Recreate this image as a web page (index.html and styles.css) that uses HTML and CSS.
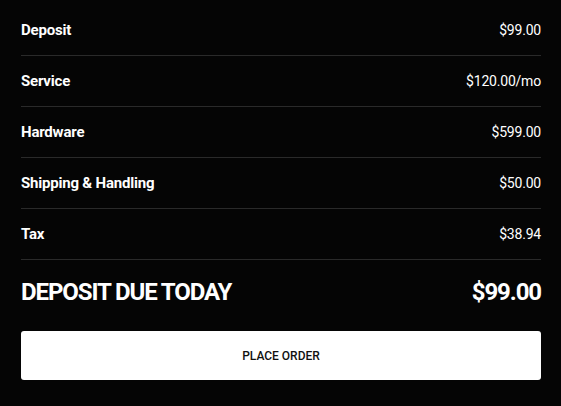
FILE: index.html
```html
<!DOCTYPE html>
<html>
<head>
<meta charset="utf-8">
<link rel="stylesheet" href="styles.css">
</head>
<body>
<div class="summary">
  <div class="row"><span class="label">Deposit</span><span class="value">$99.00</span></div>
  <div class="row"><span class="label">Service</span><span class="value">$120.00/mo</span></div>
  <div class="row"><span class="label">Hardware</span><span class="value">$599.00</span></div>
  <div class="row"><span class="label">Shipping &amp; Handling</span><span class="value">$50.00</span></div>
  <div class="row"><span class="label">Tax</span><span class="value">$38.94</span></div>
  <div class="total"><span class="total-label">DEPOSIT DUE TODAY</span><span class="total-value">$99.00</span></div>
  <button class="order">PLACE ORDER</button>
</div>
</body>
</html>
```
FILE: styles.css
```css
html, body {
  margin: 0;
  padding: 0;
  background: #050505;
}
body {
  font-family: Roboto, "Liberation Sans", sans-serif;
  color: #ffffff;
}
.summary {
  padding: 5px 20px 0 21px;
  display: flex;
  flex-direction: column;
}
.row {
  height: 50px;
  border-bottom: 1px solid #2a2a2a;
  display: flex;
  align-items: center;
  justify-content: space-between;
}
.label {
  font-weight: 700;
  font-size: 15px;
  letter-spacing: -0.2px;
}
.value {
  font-size: 14px;
  letter-spacing: -0.2px;
}
.total {
  height: 64px;
  display: flex;
  align-items: center;
  justify-content: space-between;
  font-weight: 700;
  font-size: 24px;
  letter-spacing: -1.1px;
}
.order {
  margin-top: 7px;
  height: 49px;
  width: 100%;
  border: none;
  border-radius: 3px;
  background: #ffffff;
  color: #111111;
  font-family: Roboto, "Liberation Sans", sans-serif;
  font-weight: 500;
  font-size: 12px;
  letter-spacing: 0;
  cursor: pointer;
}
```
